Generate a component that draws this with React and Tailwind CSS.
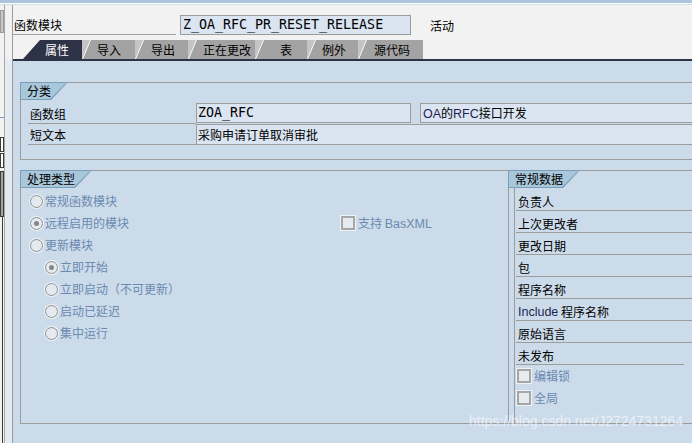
import React from 'react';

const cjk = "font-['Noto_Sans_CJK_SC','Noto_Sans',sans-serif]";
const mono = "font-['DejaVu_Sans_Mono','Noto_Sans_CJK_SC',monospace]";
const latin = "font-['Liberation_Sans','Noto_Sans_CJK_SC',sans-serif]";

function Tag({ label, width }) {
  return (
    <div className={`-ml-px -mt-px h-[18px] ${width} shrink-0 bg-[#7b9cb6] pt-px pb-px pl-px [clip-path:polygon(0_0,100%_0,calc(100%_-_17px)_100%,0_100%)]`}>
      <div className="h-full bg-[#a9c7da] pl-[6px] text-[12px] leading-[16px] text-black [clip-path:polygon(0_0,calc(100%_-_2px)_0,calc(100%_-_18px)_100%,0_100%)]">
        {label}
      </div>
    </div>
  );
}

function Radio({ label, checked, indent }) {
  return (
    <div className={`h-[22px] flex items-center ${indent ? 'pl-[24px]' : 'pl-[9px]'}`}>
      <span className="w-[13px] h-[13px] rounded-full border border-[#8e8e8e] bg-[#e4eaf0] shadow-[0_0_0_1px_#eef3f7] flex items-center justify-center">
        {checked && <span className="w-[5px] h-[5px] rounded-full bg-[#858585]" />}
      </span>
      <span className="ml-[2px] text-[12px] leading-[14px] text-[#6a8ab0]">{label}</span>
    </div>
  );
}

function Check({ label }) {
  return (
    <div className="flex items-center">
      <span className="w-[14px] h-[14px] border-2 border-[#a6a6a6] bg-[#e5ebf0] shadow-[0_0_0_1px_#eef3f7]" />
      <span className="ml-[3px] text-[12px] leading-[14px] text-[#6a8ab0]">{label}</span>
    </div>
  );
}

function Field({ children, last }) {
  return (
    <div className={`h-[22px] ml-px ${last ? 'w-[168px]' : ''} border-b border-[#9c9c9c] flex items-end pb-px pl-[2px] text-[12px] leading-[14px]`}>
      {children}
    </div>
  );
}

function LeftStrip() {
  return (
    <div className="w-[13px] shrink-0 flex">
      <div className="w-[4px] flex flex-col">
        <div className="h-[5px]" />
        <div className="h-[23px] bg-[#c9c9c9] border border-[#9a9a9a]" />
        <div className="h-[84px]" />
        <div className="h-px bg-[#6f9ccc]" />
        <div className="h-[19px]" />
        <div className="h-[15px] bg-white border border-[#3c3c3c]" />
        <div className="h-px" />
        <div className="h-[15px] bg-white border border-[#3c3c3c]" />
        <div className="h-[3px]" />
        <div className="h-[46px] bg-[#a5a5a5] border border-[#3c3c3c]" />
        <div className="flex-1 flex">
          <div className="w-[2px]" />
          <div className="w-px bg-[#3c3c3c]" />
        </div>
      </div>
      <div className="w-px bg-[#a8a8a8]" />
      <div className="w-[7px] flex flex-col">
        <div className="h-[54px] bg-[#f2f2f2]" />
        <div className="flex-1 bg-[#e3eaf1]" />
      </div>
      <div className="w-px bg-[#9c9c9c]" />
    </div>
  );
}

function TabSep() {
  return (
    <svg width="9" height="19" viewBox="0 0 9 19" className="shrink-0 block">
      <polygon points="0,0 8,0 0,19" fill="#c4c4c4" />
      <line x1="0.5" y1="19" x2="8.5" y2="0" stroke="#ffffff" strokeWidth="1" />
    </svg>
  );
}

const tabs = [
  { label: '导入', w: 'w-[53px]', pl: 'pl-[6px]' },
  { label: '导出', w: 'w-[53px]', pl: 'pl-[7px]' },
  { label: '正在更改', w: 'w-[67px]', pl: 'pl-[6px]' },
  { label: '表', w: 'w-[52px]', pl: 'pl-[16px]' },
  { label: '例外', w: 'w-[51px]', pl: 'pl-[6px]' },
  { label: '源代码', w: 'w-[65px]', pl: 'pl-[7px]' },
];

export default function App() {
  return (
    <div className={`relative w-[692px] h-[443px] overflow-hidden bg-[#f2f2f2] flex flex-col ${cjk} text-[12px] text-black`}>
      <div className="h-[3px] shrink-0 bg-[#adc4dc]" />
      <div className="h-px shrink-0 bg-white" />
      <div className="h-px shrink-0 bg-[#cfe2e2]" />

      <div className="flex flex-1 min-h-0">
        <LeftStrip />

        <div className="flex-1 min-w-0 flex flex-col overflow-hidden">
          {/* 函数模块 header */}
          <div className="pt-[10px] flex items-center h-[30px] shrink-0">
            <div className="w-[163px] h-[20px] border-b border-[#9f9f9f] pl-px flex items-end pb-[2px] leading-[14px]">函数模块</div>
            <div className={`ml-[4px] w-[231px] h-[20px] border border-[#9c9c9c] bg-[#dbe5f1] pl-[2px] ${mono} text-[13.3px] leading-[18px]`}>
              Z_OA_RFC_PR_RESET_RELEASE
            </div>
            <div className="ml-[19px] leading-[14px] pt-[2px]">活动</div>
          </div>

          {/* tabs */}
          <div className="mt-[5px] h-[19px] flex shrink-0 pl-[10px]">
            <div className="w-[59px] h-full bg-[#2d3246] text-white pl-[22px] leading-[19px] [clip-path:polygon(17px_0,100%_0,100%_100%,0_100%)]">属性</div>
            {tabs.map((t) => (
              <div key={t.label} className={`${t.w} h-full bg-[#a3a3a3] flex shrink-0`}>
                <TabSep />
                <span className={`${t.pl} leading-[19px]`}>{t.label}</span>
              </div>
            ))}
          </div>
          <div className="h-[2px] shrink-0 bg-[#2d3246]" />

          {/* content */}
          <div className="flex-1 bg-[#ccdbea] pl-[7px] pt-[21px]">
            {/* 分类 */}
            <div className="w-[700px] h-[78px] border border-[#9c9c9c] flex flex-col">
              <Tag label="分类" width="w-[48px]" />
              <div className="mt-[3px] h-[21px] flex items-start">
                <div className="ml-[7px] w-[168px] h-full border-b border-[#9c9c9c] pl-[2px] flex items-end pb-[2px] leading-[14px]">函数组</div>
                <div className={`w-[215px] h-[20px] border border-[#9c9c9c] bg-[#dbe5f1] pl-px ${mono} text-[13.3px] leading-[18px]`}>ZOA_RFC</div>
                <div className="ml-[9px] flex-1 h-[20px] border border-[#9c9c9c] bg-[#dbe5f1] pl-[2px] leading-[18px]">
                  <span className={`${latin} text-[12.5px] text-[#1c1f52]`}>OA</span>的<span className={`${latin} text-[12.5px] text-[#1c1f52]`}>RFC</span>接口开发
                </div>
              </div>
              <div className="h-[21px] flex items-start">
                <div className="ml-[7px] w-[168px] h-full border-b border-[#9c9c9c] pl-[2px] flex items-end pb-[2px] leading-[14px]">短文本</div>
                <div className="flex-1 h-[21px] border border-[#9c9c9c] bg-[#dbe5f1] pl-px leading-[19px]">采购申请订单取消审批</div>
              </div>
            </div>

            {/* 处理类型 / 常规数据 */}
            <div className="mt-[10px] w-[700px] h-[254px] flex">
              <div className="w-[489px] h-full border border-[#9c9c9c] flex flex-col shrink-0">
                <Tag label="处理类型" width="w-[72px]" />
                <div className="mt-[2px] flex flex-col">
                  <Radio label="常规函数模块" />
                  <div className="flex items-center">
                    <div className="w-[320px]">
                      <Radio label="远程启用的模块" checked />
                    </div>
                    <Check label={<span>支持 <span className={`${latin} text-[12.5px]`}>BasXML</span></span>} />
                  </div>
                  <Radio label="更新模块" />
                  <Radio label="立即开始" checked indent />
                  <Radio label="立即启动（不可更新）" indent />
                  <Radio label="启动已延迟" indent />
                  <Radio label="集中运行" indent />
                </div>
              </div>

              <div className="-ml-px flex-1 h-full border-t border-l border-b border-[#9c9c9c] flex flex-col">
                <Tag label="常规数据" width="w-[72px]" />
                <div className="flex-1 ml-[5px] border-l border-[#9c9c9c] pt-px flex flex-col">
                  <Field>负责人</Field>
                  <Field>上次更改者</Field>
                  <Field>更改日期</Field>
                  <Field>包</Field>
                  <Field>程序名称</Field>
                  <Field>
                    <span className={`${latin} text-[12.5px] text-[#1c1f52]`}>Include</span>&nbsp;程序名称
                  </Field>
                  <Field>原始语言</Field>
                  <Field last>未发布</Field>
                  <div className="h-[22px] pl-[2px] flex items-center">
                    <Check label="编辑锁" />
                  </div>
                  <div className="h-[22px] pl-[2px] flex items-center">
                    <Check label="全局" />
                  </div>
                </div>
              </div>
            </div>
          </div>
        </div>
      </div>

      {/* watermark */}
      <div className={`absolute left-[469px] top-[413px] ${latin} text-[14px] leading-[16px] text-white/60`}>
        https://blog.csdn.net/J2724731264
      </div>
    </div>
  );
}
